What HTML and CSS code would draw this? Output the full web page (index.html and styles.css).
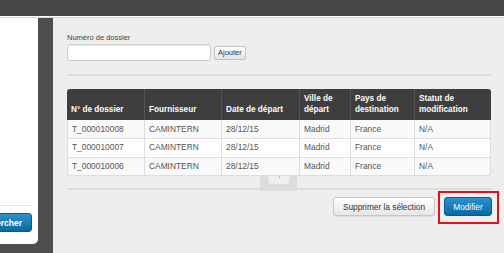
FILE: index.html
```html
<!DOCTYPE html>
<html lang="fr">
<head>
<meta charset="utf-8">
<title>Dossiers</title>
<link rel="stylesheet" href="styles.css">
</head>
<body>
<div class="topbar"></div>
<div class="layout">
  <aside class="overlay">
    <div class="modal">
      <div class="modal-footer">
        <button class="btn btn-primary btn-search">Rechercher</button>
      </div>
    </div>
  </aside>
  <main class="content">
    <label class="field-label" for="num">Numéro de dossier</label>
    <div class="field-row">
      <input id="num" class="text-input" type="text">
      <button class="btn btn-small">Ajouter</button>
    </div>
    <hr class="sep sep-top">
    <div class="table-wrap">
      <table class="grid">
        <colgroup>
          <col class="c1"><col class="c2"><col class="c3"><col class="c4"><col class="c5"><col class="c6">
        </colgroup>
        <thead>
          <tr>
            <th>N° de dossier</th>
            <th>Fournisseur</th>
            <th>Date de départ</th>
            <th>Ville de départ</th>
            <th>Pays de destination</th>
            <th>Statut de modification</th>
          </tr>
        </thead>
        <tbody>
          <tr><td>T_000010008</td><td>CAMINTERN</td><td>28/12/15</td><td>Madrid</td><td>France</td><td>N/A</td></tr>
          <tr><td>T_000010007</td><td>CAMINTERN</td><td>28/12/15</td><td>Madrid</td><td>France</td><td>N/A</td></tr>
          <tr><td>T_000010006</td><td>CAMINTERN</td><td>28/12/15</td><td>Madrid</td><td>France</td><td>N/A</td></tr>
        </tbody>
      </table>
      <div class="handle"><span class="handle-notch"></span></div>
    </div>
    <hr class="sep sep-bottom">
    <div class="actions">
      <button class="btn btn-default">Supprimer la sélection</button>
      <span class="highlight"><button class="btn btn-primary btn-modify">Modifier</button></span>
    </div>
  </main>
</div>
</body>
</html>
```

FILE: styles.css
```css
* { box-sizing: border-box; }

html, body {
  margin: 0;
  height: 253px;
  overflow: hidden;
}

body {
  font-family: "Liberation Sans", Arial, sans-serif;
  background: #eeeeee;
  color: #333;
}

.topbar {
  height: 17px;
  background: #474747;
  border-bottom: 1px solid #ffffff;
}

.layout {
  display: flex;
  height: 236px;
  border-top: 1px solid #d6d6d6;
}

.overlay {
  flex: none;
  width: 53px;
  background: #4e4e4e;
}

.modal {
  width: 38px;
  height: 226px;
  background: #ffffff;
  border-radius: 0 0 5px 0;
  overflow: hidden;
  display: flex;
  flex-direction: column;
  justify-content: flex-end;
}

.modal-footer {
  margin-right: 6px;
  border-top: 1px solid #e3e3e3;
  padding: 7px 0 12px;
  display: flex;
  justify-content: flex-end;
}

.btn {
  font-family: "Liberation Sans", Arial, sans-serif;
  border-radius: 3px;
  white-space: nowrap;
  cursor: pointer;
  margin: 0;
}

.btn-primary {
  color: #ffffff;
  background: linear-gradient(#2b92cc, #0a6aa1);
  border: 1px solid #0a5a88;
}

.btn-search {
  flex: none;
  height: 19px;
  padding: 0 9px;
  font-size: 8.5px;
  font-weight: bold;
}

.content {
  flex: 1;
  padding: 15px 12px 0 14px;
}

.field-label {
  display: block;
  font-size: 7.5px;
  line-height: 10px;
  color: #444;
  margin-bottom: 1px;
}

.field-row {
  display: flex;
  align-items: center;
  gap: 3px;
}

.text-input {
  width: 144px;
  height: 17px;
  margin: 0;
  background: #ffffff;
  border: 1px solid #cccccc;
  border-radius: 3px;
  box-shadow: inset 0 1px 1px rgba(0, 0, 0, 0.08);
}

.btn-small {
  height: 14px;
  padding: 0 3px;
  font-size: 7.5px;
  color: #333;
  background: linear-gradient(#ffffff, #e4e4e4);
  border: 1px solid #c4c4c4;
  border-radius: 2px;
}

.sep {
  border: 0;
  height: 2px;
  background: #dddddd;
  margin: 0;
}

.sep-top {
  margin: 13px 0 13px;
}

.table-wrap {
  position: relative;
  width: 424px;
}

.grid {
  width: 424px;
  table-layout: fixed;
  border-collapse: separate;
  border-spacing: 0;
}

.c1 { width: 77px; }
.c2 { width: 77px; }
.c3 { width: 78px; }
.c4 { width: 51px; }
.c5 { width: 64px; }
.c6 { width: 77px; }

.grid th {
  background: #3e3e3e;
  color: #ffffff;
  font-weight: bold;
  font-size: 8.2px;
  line-height: 11px;
  text-align: left;
  vertical-align: bottom;
  padding: 4px 4px 5px;
  border-left: 1px solid #555555;
}

.grid th:first-child {
  border-left: 0;
  border-top-left-radius: 3px;
}

.grid th:last-child {
  border-top-right-radius: 3px;
}

.grid td {
  background: #ffffff;
  color: #555555;
  font-size: 8.4px;
  line-height: 11px;
  padding: 3.5px 4px 3.3px;
  border-top: 1px solid #dddddd;
  border-left: 1px solid #dddddd;
  white-space: nowrap;
}

.grid tbody tr:nth-child(odd) td {
  background: #f9f9f9;
}

.grid tbody tr:first-child td {
  border-top: 0;
}

.grid td:last-child {
  border-right: 1px solid #dddddd;
}

.grid tbody tr:last-child td {
  border-bottom: 1px solid #dddddd;
}

.grid tbody tr:last-child td:first-child {
  border-bottom-left-radius: 3px;
}

.grid tbody tr:last-child td:last-child {
  border-bottom-right-radius: 3px;
}

.handle {
  position: absolute;
  left: 193px;
  top: 100%;
  width: 37px;
  height: 15px;
  background: #dcdcdc;
}

.handle-notch {
  position: absolute;
  left: 8px;
  right: 8px;
  top: 0;
  height: 8px;
  background: #efefef;
  border-radius: 0 0 4px 4px;
}

.handle-notch::after {
  content: "";
  position: absolute;
  left: 50%;
  top: 0;
  width: 1px;
  height: 2px;
  background: #bbbbbb;
}

.sep-bottom {
  margin: 12px 0 7px;
}

.actions {
  display: flex;
  justify-content: flex-end;
  align-items: center;
  gap: 9px;
}

.btn-default {
  height: 19px;
  padding: 0 9px;
  font-size: 8.3px;
  color: #333;
  background: linear-gradient(#ffffff, #e6e6e6);
  border: 1px solid #c6c6c6;
  box-shadow: 0 1px 1px rgba(0, 0, 0, 0.08);
}

.highlight {
  position: relative;
  display: flex;
}

.highlight::after {
  content: "";
  position: absolute;
  left: -6px;
  right: -7px;
  top: -6px;
  bottom: -8px;
  border: 2px solid #e3101b;
}

.btn-modify {
  height: 19px;
  width: 48px;
  padding: 0;
  font-size: 8.3px;
}
```
